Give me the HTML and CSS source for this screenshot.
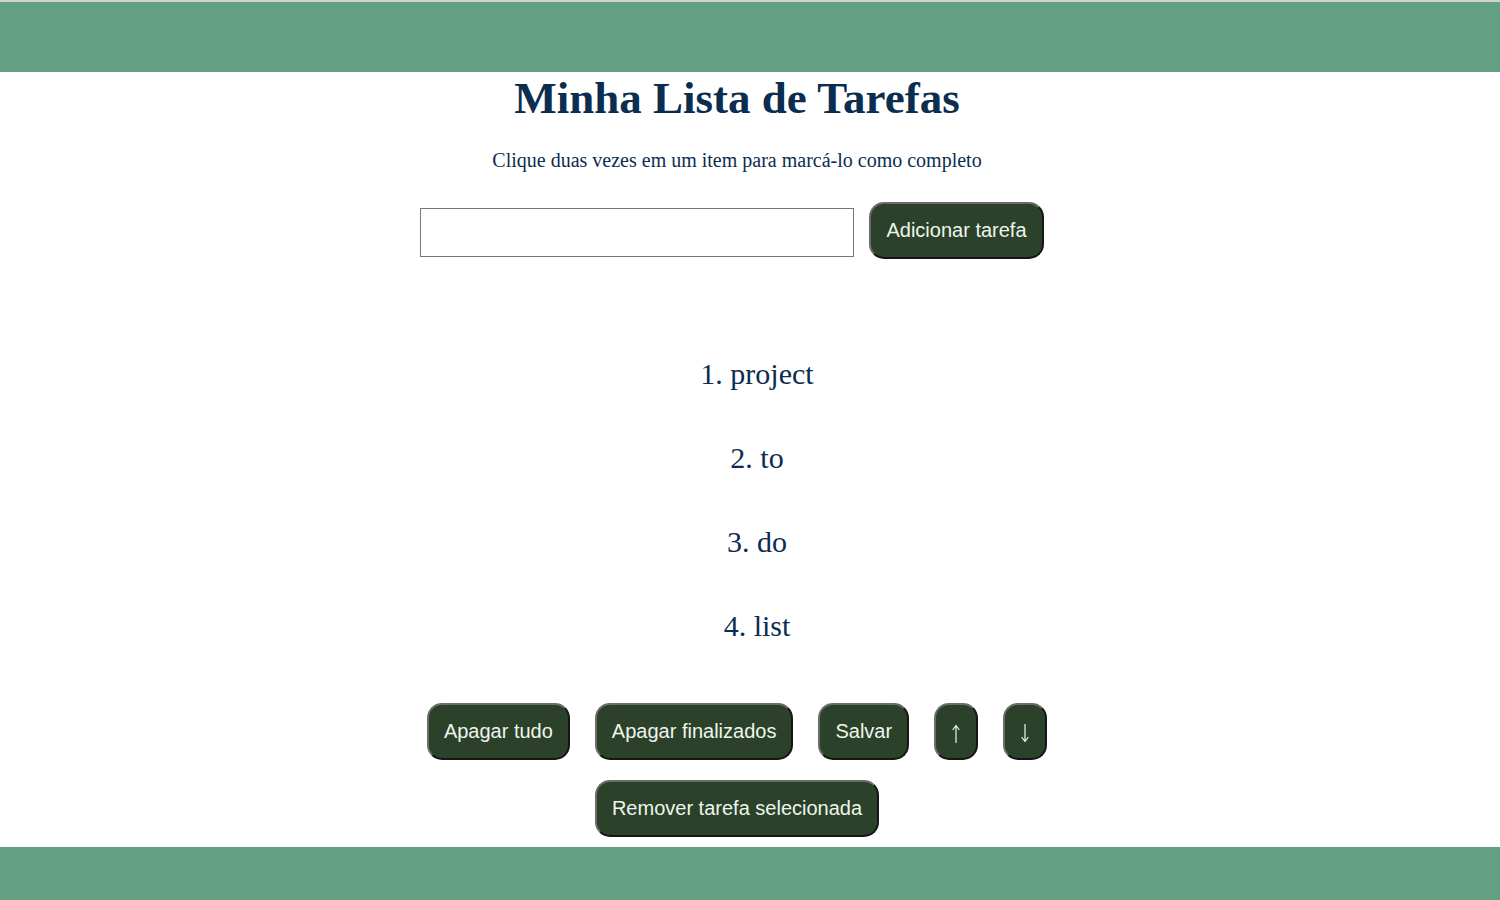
FILE: index.html
```html
<!DOCTYPE html>
<html lang="pt">
<head>
<meta charset="utf-8">
<title>Minha Lista de Tarefas</title>
<link rel="stylesheet" href="styles.css">
</head>
<body>
<div class="topline"></div>
<header class="header"></header>
<main class="main">
  <h1 class="title">Minha Lista de Tarefas</h1>
  <p class="subtitle">Clique duas vezes em um item para marcá-lo como completo</p>
  <div class="add-row">
    <input class="task-input" type="text">
    <button class="btn">Adicionar tarefa</button>
  </div>
  <ol class="task-list">
    <li class="task">project</li>
    <li class="task">to</li>
    <li class="task">do</li>
    <li class="task">list</li>
  </ol>
  <div class="actions">
    <button class="btn">Apagar tudo</button>
    <button class="btn">Apagar finalizados</button>
    <button class="btn">Salvar</button>
    <button class="btn arrow" aria-label="↑"><svg class="arrow-icon" width="10" height="19" viewBox="0 0 10 19"><path d="M5 1.5V18.5M5 1.5L2 5.5M5 1.5L8 5.5" fill="none" stroke="#eef5ee" stroke-width="1.2" stroke-linecap="round"/></svg></button>
    <button class="btn arrow" aria-label="↓"><svg class="arrow-icon" width="10" height="19" viewBox="0 0 10 19"><path d="M5 0.5V17.5M5 17.5L2 13.5M5 17.5L8 13.5" fill="none" stroke="#eef5ee" stroke-width="1.2" stroke-linecap="round"/></svg></button>
  </div>
  <div class="actions second">
    <button class="btn">Remover tarefa selecionada</button>
  </div>
</main>
<footer class="footer"></footer>
</body>
</html>
```

FILE: styles.css
```css
html, body {
  margin: 0;
  padding: 0;
  background: #ffffff;
  font-family: "Liberation Serif", "Times New Roman", serif;
  color: #0b2d50;
}
.topline {
  height: 2px;
  background: #d2d2d2;
}
.header {
  height: 70px;
  background: #63a083;
}
.main {
  display: flex;
  flex-direction: column;
  align-items: center;
  padding-right: 26px;
  height: 775px;
}
.title {
  margin: -1px 0 0;
  font-size: 45px;
  font-weight: bold;
  line-height: 54px;
  color: #0b2d50;
}
.subtitle {
  margin: 24px 0 0;
  font-size: 20px;
  line-height: 22px;
}
.add-row {
  display: flex;
  align-items: flex-start;
  gap: 15px;
  margin-top: 31px;
  margin-left: -10px;
}
.task-input {
  box-sizing: border-box;
  height: 49px;
  width: 434px;
  margin-top: 6px;
  border: 1px solid #767676;
  padding: 0 8px;
  font-size: 18px;
}
.btn {
  font-family: "Liberation Sans", Arial, sans-serif;
  font-size: 20px;
  line-height: 23px;
  padding: 15px 15px;
  background: #2b4129;
  color: #eef5ee;
  border: 2px outset #6b6b6b;
  border-radius: 15px;
  cursor: pointer;
}
.btn.arrow {
  width: 44px;
  padding: 15px 0;
  display: flex;
  justify-content: center;
  align-items: center;
}
.arrow-icon {
  display: block;
  margin-top: 4px;
}
.task-list {
  list-style-position: inside;
  padding-left: 40px;
  margin: 99px 0 0;
  text-align: center;
}
.task {
  font-size: 30px;
  line-height: 32px;
  margin-bottom: 52px;
}
.actions {
  display: flex;
  gap: 25px;
  margin-top: 9px;
}
.actions.second {
  margin-top: 20px;
}
.footer {
  height: 53px;
  background: #63a083;
}
```
